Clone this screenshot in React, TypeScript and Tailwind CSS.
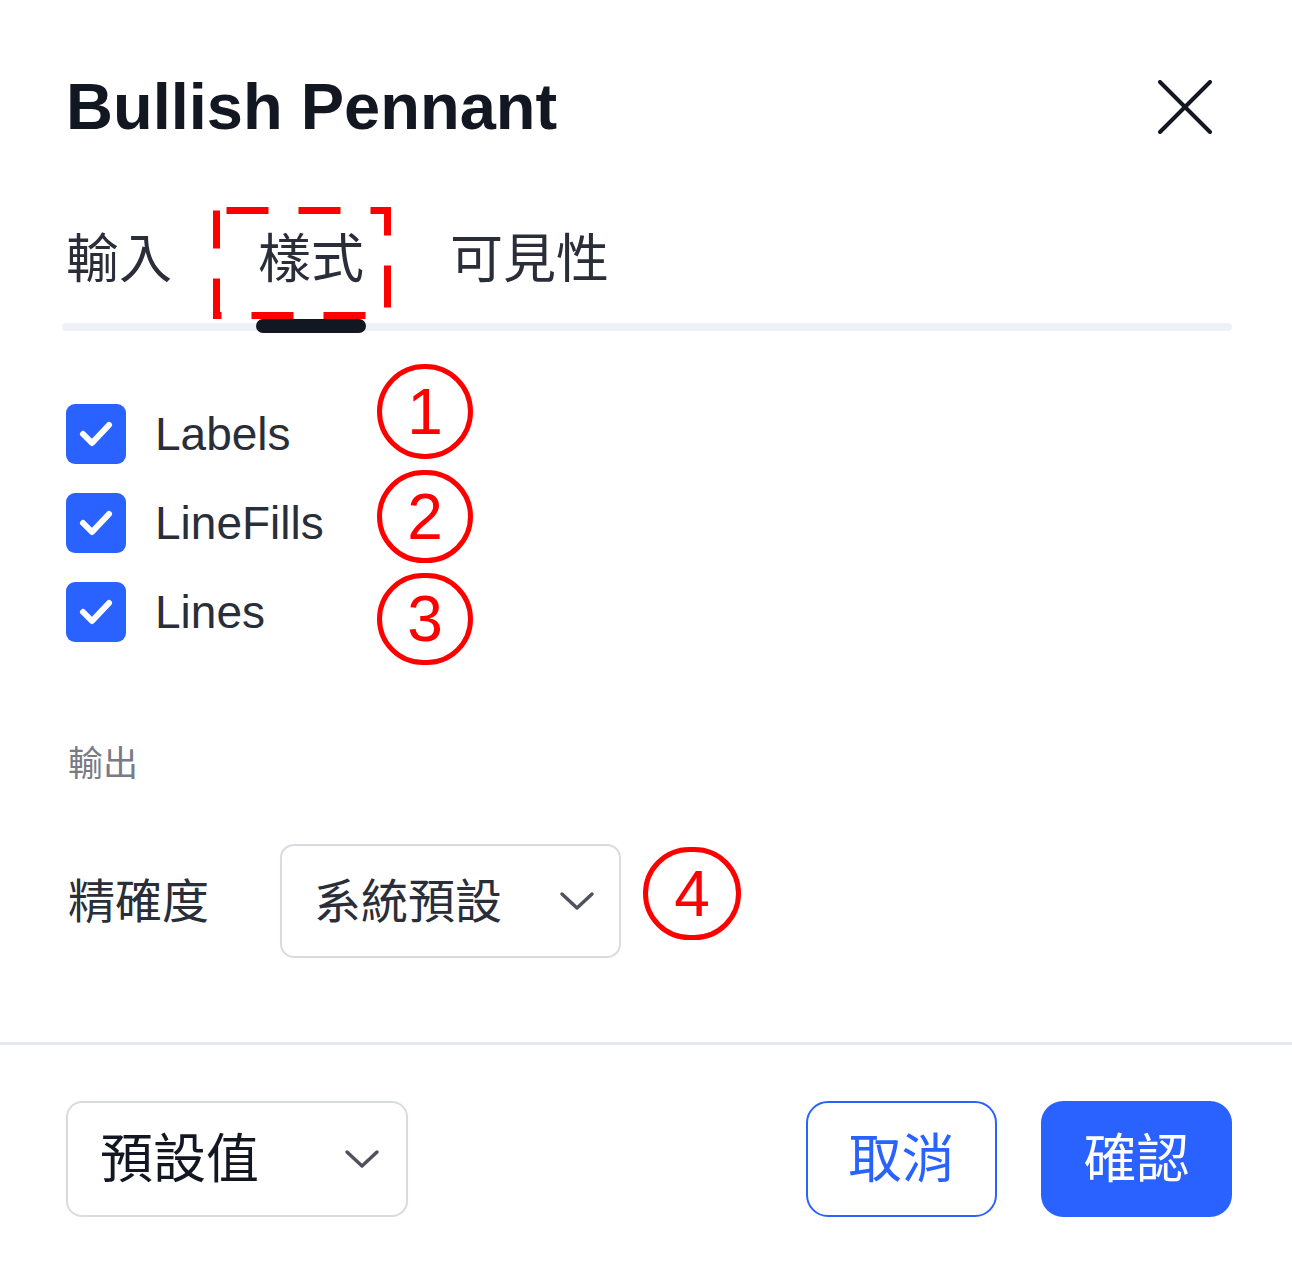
import React from 'react';

const font = "font-['Liberation_Sans','Noto_Sans_CJK_TC',sans-serif]";

function Chevron({ className }: { className?: string }) {
  return (
    <svg className={className} viewBox="0 0 36 20" fill="none">
      <path d="M3 3 L18 17 L33 3" stroke="#50535e" strokeWidth="3.5" strokeLinecap="round" strokeLinejoin="round" />
    </svg>
  );
}

function Check() {
  return (
    <div className="w-[60px] h-[60px] rounded-[9px] bg-[#2962ff] flex items-center justify-center shrink-0">
      <svg width="36" height="30" viewBox="0 0 36 30" fill="none">
        <path d="M5 15 L14 24 L31 6" stroke="white" strokeWidth="6" strokeLinecap="round" strokeLinejoin="round" />
      </svg>
    </div>
  );
}

function Marker({ n, className }: { n: string; className: string }) {
  return (
    <div
      className={`absolute rounded-full border-[5px] border-[#ff0000] flex items-center justify-center text-[#ff0000] text-[64px] leading-none ${className}`}
    >
      {n}
    </div>
  );
}

export default function App() {
  const options = ['Labels', 'LineFills', 'Lines'];

  return (
    <div className={`relative w-[1292px] h-[1261px] bg-white ${font} text-[#131722]`}>
      {/* Header */}
      <div className="px-[66px] pr-[80px] pt-[74px] flex items-center justify-between">
        <h1 className="text-[65px] font-bold leading-none">Bullish Pennant</h1>
        <svg width="54" height="54" viewBox="0 0 54 54" fill="none">
          <path d="M2 2 L52 52 M52 2 L2 52" stroke="#131722" strokeWidth="4" strokeLinecap="round" />
        </svg>
      </div>

      {/* Tabs */}
      <div className="relative mt-[94px] ml-[62px] mr-[60px]">
        <div className="absolute left-0 right-0 bottom-[2px] h-[8px] rounded-full bg-[#eef1f8]" />
        <div className="relative flex gap-[84px] pl-[4px] text-[53px] leading-none text-[#2a2e39]">
          <div className="flex flex-col items-center">
            <span>輸入</span>
            <div className="mt-[33px] h-[14px] w-full" />
          </div>
          <div className="flex flex-col items-center">
            <span className="px-[2px]">樣式</span>
            <div className="mt-[33px] h-[14px] w-full rounded-full bg-[#131722]" />
          </div>
          <div className="flex flex-col items-center">
            <span>可見性</span>
            <div className="mt-[33px] h-[14px] w-full" />
          </div>
        </div>
      </div>

      {/* Options */}
      <div className="mt-[71px] px-[66px] flex flex-col gap-[29px]">
        {options.map((o) => (
          <div key={o} className="flex items-center gap-[29px] h-[60px]">
            <Check />
            <span className="text-[46px] leading-none text-[#2a2e39]">{o}</span>
          </div>
        ))}
      </div>

      {/* Output */}
      <div className="mt-[104px] px-[68px] text-[35px] leading-none text-[#787b86]">輸出</div>

      <div className="mt-[63px] px-[68px] flex items-center gap-[71px]">
        <span className="text-[47px] leading-none text-[#2a2e39]">精確度</span>
        <div className="w-[341px] h-[114px] rounded-[14px] border-2 border-[#d9dbe3] flex items-center justify-between pl-[32px] pr-[24px]">
          <span className="text-[47px] leading-none text-[#2a2e39]">系統預設</span>
          <Chevron className="w-[36px] h-[20px]" />
        </div>
      </div>

      <div className="mt-[84px] h-[3px] bg-[#e6e8ee]" />

      {/* Footer */}
      <div className="mt-[56px] pl-[66px] pr-[60px] flex items-center justify-between">
        <div className="w-[342px] h-[116px] rounded-[16px] border-2 border-[#d9dbe3] flex items-center justify-between pl-[32px] pr-[26px]">
          <span className="text-[53px] leading-none text-[#131722]">預設值</span>
          <Chevron className="w-[36px] h-[20px]" />
        </div>
        <div className="flex gap-[44px]">
          <button className="w-[191px] h-[116px] rounded-[22px] border-[2.5px] border-[#2962ff] text-[#2962ff] text-[53px] leading-none flex items-center justify-center">
            取消
          </button>
          <button className="w-[191px] h-[116px] rounded-[22px] bg-[#2962ff] text-white text-[53px] leading-none flex items-center justify-center">
            確認
          </button>
        </div>
      </div>

      {/* Annotations */}
      <svg className="absolute left-[209px] top-[203px]" width="186" height="120" viewBox="0 0 186 120" fill="none">
        <rect x="7.5" y="7.5" width="171" height="105" stroke="#ff0000" strokeWidth="7" strokeDasharray="42 30" strokeDashoffset="-10" />
      </svg>
      <Marker n="1" className="left-[377px] top-[364px] w-[96px] h-[95px]" />
      <Marker n="2" className="left-[377px] top-[470px] w-[96px] h-[93px]" />
      <Marker n="3" className="left-[377px] top-[573px] w-[96px] h-[92px]" />
      <Marker n="4" className="left-[643px] top-[847px] w-[98px] h-[93px]" />
    </div>
  );
}
